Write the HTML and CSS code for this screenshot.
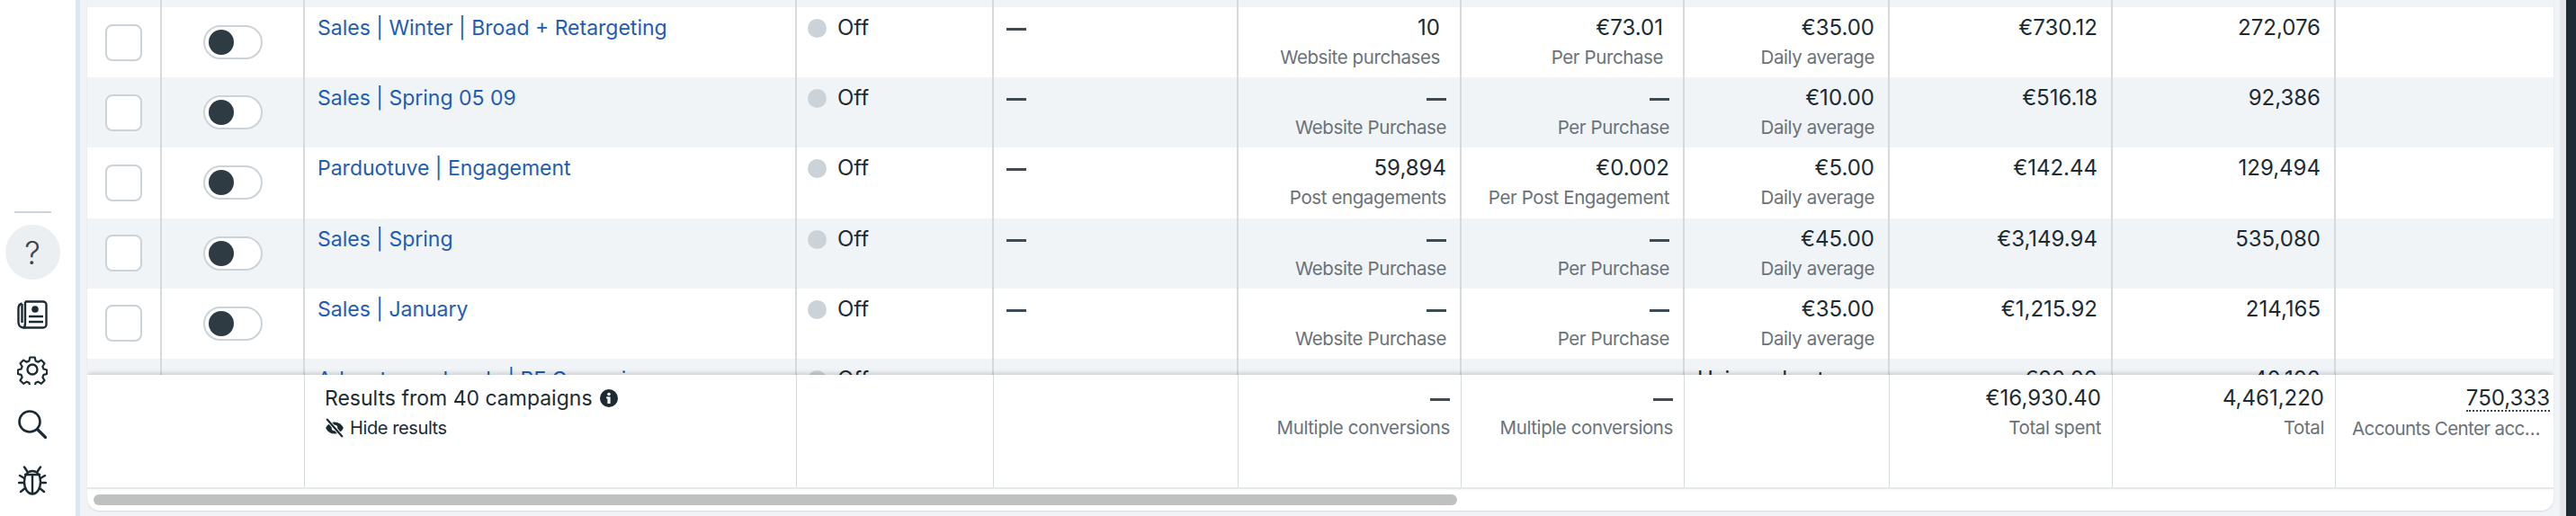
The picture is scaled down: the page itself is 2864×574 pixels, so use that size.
FILE: index.html
```html
<!DOCTYPE html>
<html lang="en">
<head>
<meta charset="utf-8">
<title>Campaigns</title>
<link rel="stylesheet" href="styles.css">
</head>
<body>
<div class="app">
  <aside class="rail">
    <div class="rail-divider"></div>
    <div class="rail-help">?</div>
    <svg class="rail-icon news" viewBox="0 0 34 32" fill="none" stroke="#1c2b33" stroke-width="2.4"><path d="M9 1.500h20a3.500 3.500 0 0 1 3.500 3.500v22a3.500 3.500 0 0 1-3.500 3.500H7c-3.500 0-5.500-2.500-5.500-6V9c0-3 2-5 4-5.500"/><path d="M9 1.500V25c0 3-1 5.500-2 5.500M5.500 4v21"/><circle cx="20" cy="10" r="3.800" fill="#1c2b33" stroke="none"/><path d="M13 18h16M13 24h16"/></svg>
    <svg class="rail-icon gear" viewBox="0 0 34 34" fill="none" stroke="#1c2b33" stroke-width="2.400" stroke-linejoin="round"><circle cx="17" cy="17" r="5.500"/><path d="M14 2h6l1 4.500 3 1.300 4-2.400 4 4.100-2.400 3.900 1.300 3.100 4 1v5l-4 1-1.300 3.100 2.400 3.900-4 4.100-4-2.400-3 1.300-1 4.500h-6l-1-4.500-3-1.300-4 2.400-4-4.100 2.400-3.900-1.300-3.100-4-1v-5l4-1 1.300-3.100-2.400-3.900 4-4.100 4 2.400 3-1.300z" transform="translate(1.700 1.700) scale(.9)"/></svg>
    <svg class="rail-icon search" viewBox="0 0 32 32" fill="none" stroke="#1c2b33" stroke-width="2.600" stroke-linecap="round"><circle cx="13" cy="13" r="11.500"/><path d="M21.500 21.500l9 9" stroke-width="3.200"/></svg>
    <svg class="rail-icon bug" viewBox="0 0 32 33" fill="none" stroke="#1c2b33" stroke-width="2.400" stroke-linecap="round" stroke-linejoin="round"><path d="M16 6c-6 0-9 5-9 12 0 8 4 13.500 9 13.500s9-5.500 9-13.500c0-7-3-12-9-12z"/><path d="M16 10v21M8 10h16M10 6L7 1.500M22 6l3-4.500M7 14l-5-3M25 14l5-3M6.500 19H1M25.500 19H31M8 25l-5 4M24 25l5 4"/></svg>
  </aside>
  <main class="pane">
    <div class="card">
      <div class="rows">
        <div class="row row-alt row-cut">
          <div class="cell"></div><div class="cell"></div><div class="cell"></div><div class="cell"></div><div class="cell"></div><div class="cell"></div><div class="cell"></div><div class="cell"></div><div class="cell"></div><div class="cell"></div><div class="cell cell-last"></div>
        </div>
        <div class="row">
          <div class="cell cell-center"><span class="check"></span></div>
          <div class="cell cell-center"><span class="toggle"><span class="knob"></span></span></div>
          <div class="cell cell-name"><a class="link">Sales | Winter | Broad + Retargeting</a></div>
          <div class="cell cell-status"><span class="dot"></span><span class="main">Off</span></div>
          <div class="cell cell-dash"><span class="dash"></span></div>
          <div class="cell cell-num cell-inset"><span class="main">10</span><span class="sub">Website purchases</span></div>
          <div class="cell cell-num cell-inset"><span class="main">€73.01</span><span class="sub">Per Purchase</span></div>
          <div class="cell cell-num"><span class="main">€35.00</span><span class="sub">Daily average</span></div>
          <div class="cell cell-num"><span class="main">€730.12</span></div>
          <div class="cell cell-num"><span class="main">272,076</span></div>
          <div class="cell cell-last"></div>
        </div>
        <div class="row row-alt">
          <div class="cell cell-center"><span class="check"></span></div>
          <div class="cell cell-center"><span class="toggle"><span class="knob"></span></span></div>
          <div class="cell cell-name"><a class="link">Sales | Spring 05 09</a></div>
          <div class="cell cell-status"><span class="dot"></span><span class="main">Off</span></div>
          <div class="cell cell-dash"><span class="dash"></span></div>
          <div class="cell cell-num"><span class="dash dash-line"></span><span class="sub">Website Purchase</span></div>
          <div class="cell cell-num"><span class="dash dash-line"></span><span class="sub">Per Purchase</span></div>
          <div class="cell cell-num"><span class="main">€10.00</span><span class="sub">Daily average</span></div>
          <div class="cell cell-num"><span class="main">€516.18</span></div>
          <div class="cell cell-num"><span class="main">92,386</span></div>
          <div class="cell cell-last"></div>
        </div>
        <div class="row">
          <div class="cell cell-center"><span class="check"></span></div>
          <div class="cell cell-center"><span class="toggle"><span class="knob"></span></span></div>
          <div class="cell cell-name"><a class="link">Parduotuve | Engagement</a></div>
          <div class="cell cell-status"><span class="dot"></span><span class="main">Off</span></div>
          <div class="cell cell-dash"><span class="dash"></span></div>
          <div class="cell cell-num"><span class="main">59,894</span><span class="sub">Post engagements</span></div>
          <div class="cell cell-num"><span class="main">€0.002</span><span class="sub">Per Post Engagement</span></div>
          <div class="cell cell-num"><span class="main">€5.00</span><span class="sub">Daily average</span></div>
          <div class="cell cell-num"><span class="main">€142.44</span></div>
          <div class="cell cell-num"><span class="main">129,494</span></div>
          <div class="cell cell-last"></div>
        </div>
        <div class="row row-alt">
          <div class="cell cell-center"><span class="check"></span></div>
          <div class="cell cell-center"><span class="toggle"><span class="knob"></span></span></div>
          <div class="cell cell-name"><a class="link">Sales | Spring</a></div>
          <div class="cell cell-status"><span class="dot"></span><span class="main">Off</span></div>
          <div class="cell cell-dash"><span class="dash"></span></div>
          <div class="cell cell-num"><span class="dash dash-line"></span><span class="sub">Website Purchase</span></div>
          <div class="cell cell-num"><span class="dash dash-line"></span><span class="sub">Per Purchase</span></div>
          <div class="cell cell-num"><span class="main">€45.00</span><span class="sub">Daily average</span></div>
          <div class="cell cell-num"><span class="main">€3,149.94</span></div>
          <div class="cell cell-num"><span class="main">535,080</span></div>
          <div class="cell cell-last"></div>
        </div>
        <div class="row">
          <div class="cell cell-center"><span class="check"></span></div>
          <div class="cell cell-center"><span class="toggle"><span class="knob"></span></span></div>
          <div class="cell cell-name"><a class="link">Sales | January</a></div>
          <div class="cell cell-status"><span class="dot"></span><span class="main">Off</span></div>
          <div class="cell cell-dash"><span class="dash"></span></div>
          <div class="cell cell-num"><span class="dash dash-line"></span><span class="sub">Website Purchase</span></div>
          <div class="cell cell-num"><span class="dash dash-line"></span><span class="sub">Per Purchase</span></div>
          <div class="cell cell-num"><span class="main">€35.00</span><span class="sub">Daily average</span></div>
          <div class="cell cell-num"><span class="main">€1,215.92</span></div>
          <div class="cell cell-num"><span class="main">214,165</span></div>
          <div class="cell cell-last"></div>
        </div>
        <div class="row row-alt">
          <div class="cell cell-center"><span class="check"></span></div>
          <div class="cell cell-center"><span class="toggle"><span class="knob"></span></span></div>
          <div class="cell cell-name"><a class="link">Advantage+ Leads | BF Campaign</a></div>
          <div class="cell cell-status"><span class="dot"></span><span class="main">Off</span></div>
          <div class="cell cell-dash"><span class="dash"></span></div>
          <div class="cell cell-num"></div>
          <div class="cell cell-num"></div>
          <div class="cell cell-wrap">Using ad set budget</div>
          <div class="cell cell-num"><span class="main">€20.00</span></div>
          <div class="cell cell-num"><span class="main">40,100</span></div>
          <div class="cell cell-last"></div>
        </div>
      </div>
      <div class="totals">
        <div class="tcell tcell-lead"></div>
        <div class="tcell tcell-results">
          <div class="results-title">Results from 40 campaigns
            <svg class="info" viewBox="0 0 20 20"><circle cx="10" cy="10" r="10" fill="#1c2b33"/><circle cx="10" cy="5.500" r="1.800" fill="#fff"/><rect x="8.400" y="8.500" width="3.200" height="7.500" fill="#fff"/><rect x="7" y="8.500" width="3" height="1.800" fill="#fff"/></svg>
          </div>
          <div class="results-hide">
            <svg class="eye" viewBox="0 0 20 20" fill="none" stroke="#1c2b33"><path d="M1 10c2-4 5-6 9-6s7 2 9 6c-2 4-5 6-9 6s-7-2-9-6z" fill="#1c2b33" stroke="none"/><circle cx="10" cy="10" r="3" fill="#fff" stroke="none"/><path d="M2 1l16 18" stroke="#fff" stroke-width="3.500"/><path d="M2 1l16 18" stroke-width="2"/></svg>
            <span>Hide results</span>
          </div>
        </div>
        <div class="tcell"></div>
        <div class="tcell"></div>
        <div class="tcell tcell-num"><span class="dash dash-line"></span><span class="sub">Multiple conversions</span></div>
        <div class="tcell tcell-num"><span class="dash dash-line"></span><span class="sub">Multiple conversions</span></div>
        <div class="tcell"></div>
        <div class="tcell tcell-num"><span class="main">€16,930.40</span><span class="sub">Total spent</span></div>
        <div class="tcell tcell-num"><span class="main">4,461,220</span><span class="sub">Total</span></div>
        <div class="tcell tcell-num tcell-last"><span class="main dotted">750,333</span><span class="sub clip">Accounts Center accounts reached</span></div>
      </div>
      <div class="scrollbar"><div class="thumb"></div></div>
    </div>
    <div class="edge"></div>
    <div class="backdrop"></div>
  </main>
</div>
</body>
</html>
```

FILE: styles.css
```css
* { box-sizing: border-box; }
html, body { margin: 0; padding: 0; height: 574px; overflow: hidden; }
body {
  width: 2864px;
  font-family: Inter, "Liberation Sans", sans-serif;
  font-size: 23px;
  color: #1c2b33;
  background: #f0f4f7;
}
.app { display: flex; height: 574px; }

.rail {
  width: 84px;
  flex: none;
  background: #fff;
  display: flex;
  flex-direction: column;
  align-items: center;
  padding-top: 235px;
  padding-right: 12px;
}
.rail-divider { width: 41px; height: 2px; background: #ccd3d8; margin-bottom: 13px; }
.rail-help {
  width: 61px;
  height: 61px;
  border-radius: 50%;
  background: #ebeff1;
  display: flex;
  align-items: center;
  justify-content: center;
  font-size: 35px;
  font-weight: 300;
  color: #39464e;
  margin-bottom: 23px;
}
.rail-icon { display: block; flex: none; }
.news { width: 34px; height: 32px; margin-bottom: 28px; }
.gear { width: 34px; height: 34px; margin-bottom: 28px; }
.search { width: 32px; height: 32px; margin-bottom: 30px; }
.bug { width: 32px; height: 33px; }

.pane {
  flex: 1;
  display: flex;
  min-width: 0;
  padding-left: 8px;
  border-left: 5px solid #dbe7ef;
  background: #f0f4f7;
}
.card {
  width: 2742px;
  height: 568px;
  flex: none;
  background: #fff;
  border-radius: 0 0 14px 14px;
  box-shadow: 0 1px 2px rgba(0, 0, 0, .1);
  display: flex;
  flex-direction: column;
  overflow: hidden;
}
.edge { width: 7px; margin-left: 7px; flex: none; background: #e4e8eb; }
.backdrop { width: 11px; flex: none; background: #1f2b33; }

.rows { height: 417px; flex: none; overflow: hidden; }
.row, .totals {
  display: grid;
  grid-template-columns: 83px 159px 547px 219px 272px 248px 248px 228px 248px 248px 242px;
}
.row { height: 78.2px; background: #fff; }
.row-alt { background: #f0f4f7; }
.row-cut { height: 8px; }

.cell { border-right: 2px solid #d5dadd; padding: 9px 15px 0 14px; min-width: 0; }
.cell-last { border-right: 0; }
.cell-center { padding: 0; display: flex; align-items: center; justify-content: center; }
.cell-name { line-height: 28px; }
.cell-status { display: flex; align-items: flex-start; padding-left: 12px; }
.cell-dash { padding-top: 0; }
.cell-wrap { font-size: 24px; line-height: 28px; }
.cell-num {
  display: flex;
  flex-direction: column;
  align-items: flex-end;
  text-align: right;
}
.cell-inset { padding-right: 22px; }

.check {
  width: 41px;
  height: 41px;
  background: #fff;
  border: 2px solid #ccd3d8;
  border-radius: 8px;
}
.toggle {
  width: 66px;
  height: 38px;
  background: #fff;
  border: 2px solid #ccd3d8;
  border-radius: 19px;
  display: flex;
  align-items: center;
  padding-left: 4px;
}
.knob { width: 28px; height: 28px; border-radius: 50%; background: #2e3b43; }

.link { color: #1f5cb5; }
.main { font-size: 24px; line-height: 28px; height: 28px; white-space: nowrap; }
.sub { margin-top: 5px; font-size: 20.500px; line-height: 28px; color: #6a7278; white-space: nowrap; letter-spacing: -0.4px; }
.dot { width: 21px; height: 21px; margin-top: 4px; margin-right: 12px; border-radius: 50%; background: #ccd3d8; flex: none; }
.dash { display: block; width: 22px; height: 3px; background: #3f4b53; margin-top: 23px; }
.dash-line { margin-top: 14px; margin-bottom: 11px; }

.totals {
  height: 127px;
  flex: none;
  background: #fff;
  border-bottom: 2px solid #e6e9eb;
  box-shadow: 0 -2px 5px rgba(0, 0, 0, .16);
  position: relative;
}
.tcell { border-right: 1px solid #d5dadd; padding: 12px 12px 0; min-width: 0; }
.tcell-lead { grid-column: span 2; }
.tcell-results { padding-left: 22px; }
.tcell-num { display: flex; flex-direction: column; align-items: flex-end; }
.tcell-last { border-right: 0; padding-left: 18px; padding-right: 4px; }
.results-title { line-height: 28px; display: flex; align-items: center; gap: 8px; white-space: nowrap; }
.info { width: 20px; height: 20px; }
.results-hide { display: flex; align-items: center; gap: 6px; margin-top: 5px; font-size: 20px; line-height: 28px; letter-spacing: -0.4px; }
.eye { width: 22px; height: 24px; }
.dotted { border-bottom: 2px dotted #39464e; height: 29px; }
.clip { width: 100%; overflow: hidden; text-overflow: ellipsis; text-align: right; letter-spacing: -0.6px; }

.scrollbar { flex: 1; padding: 6px 7px; }
.thumb { width: 1516px; height: 12px; border-radius: 6px; background: #bfc1c1; }
```
